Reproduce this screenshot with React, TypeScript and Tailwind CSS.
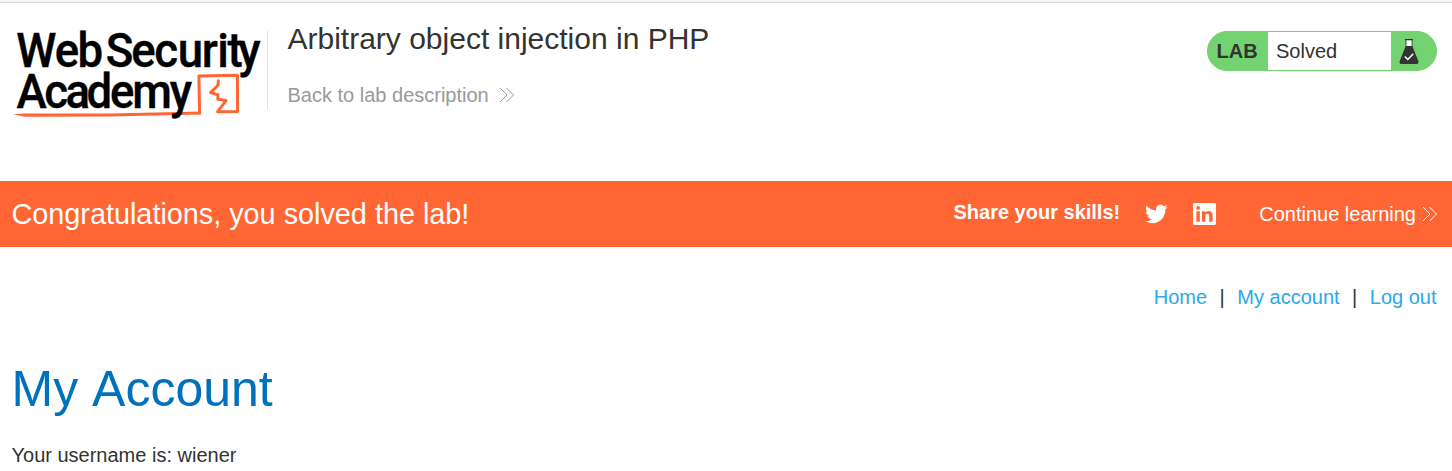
import React from 'react';

function Logo() {
  return (
    <svg width="268" height="126" viewBox="0 0 268 126" className="block shrink-0" aria-label="Web Security Academy">
      <path
        d="M199.6 113.2 L198.9 76 L237.4 75.3 L237.6 111.4 L217.6 111.7 L226 100.6 L217.8 99.2 L218 94.8 L210.6 92.6 L217.9 85.2 L218.4 80.8"
        fill="none"
        stroke="#ff6633"
        strokeWidth="3"
        strokeLinejoin="round"
        strokeLinecap="round"
      />
      <path d="M13 114.3 L25 113.5 L110 113.5 L201 111.5 L200.6 114.4 L110 116.5 L25 116.8 Z" fill="#ff6633" />
      <g transform="scale(0.95 1)" fill="#000" stroke="#000" strokeWidth="0.4" fontFamily="Roboto, sans-serif" fontWeight="500" fontSize="48">
        <text x="17.2 57.7 81.6" y="67">Web</text>
        <text x="111.3 138.2 162.5 187.2 212.5 228.7 239.6 250.8" y="67">Security</text>
        <text x="17.5 46.7 69 91.1 115.8 139.3 178.7" y="108">Academy</text>
      </g>
    </svg>
  );
}

function Chevrons({ className }: { className: string }) {
  return (
    <svg width="16" height="16" viewBox="0 0 16 16" className={className} fill="none" stroke="currentColor" strokeWidth="1">
      <path d="M1 1 L8 8 L1 15 M7.5 1 L14.5 8 L7.5 15" />
    </svg>
  );
}

function Flask() {
  return (
    <svg width="20" height="26" viewBox="0 0 20 26" className="mt-[2px] block">
      <path d="M7 1 V8 H13 V1 Z" fill="#fff" />
      <path d="M6 .7 H14" stroke="#333332" strokeWidth="1.2" fill="none" />
      <path d="M7 1 V8 M13 1 V8" stroke="#333332" strokeWidth=".8" fill="none" />
      <path d="M6.7 7 H13.3 L19.3 22 Q20 25 17.5 25 H2.5 Q0 25 .7 22 Z" fill="#333332" />
      <path d="M5.8 17.5 L8.8 20.5 L14.3 14.8" fill="none" stroke="#fff" strokeWidth="1.5" />
    </svg>
  );
}

function Twitter() {
  return (
    <svg width="24" height="24" viewBox="0 0 24 24" fill="#fff" className="block">
      <path d="M23.643 4.937c-.835.37-1.732.62-2.675.733.962-.576 1.7-1.49 2.048-2.578-.9.534-1.897.922-2.958 1.13-.85-.904-2.06-1.47-3.4-1.47-2.572 0-4.658 2.086-4.658 4.66 0 .364.042.718.12 1.06-3.873-.195-7.304-2.05-9.602-4.868-.4.69-.63 1.49-.63 2.342 0 1.616.823 3.043 2.072 3.878-.764-.025-1.482-.234-2.11-.583v.06c0 2.257 1.605 4.14 3.737 4.568-.392.106-.803.162-1.227.162-.3 0-.593-.028-.877-.082.593 1.85 2.313 3.198 4.352 3.234-1.595 1.25-3.604 1.995-5.786 1.995-.376 0-.747-.022-1.112-.065 2.062 1.323 4.51 2.093 7.14 2.093 8.57 0 13.255-7.098 13.255-13.254 0-.2-.005-.402-.014-.602.91-.658 1.7-1.477 2.323-2.41z" />
    </svg>
  );
}

function LinkedIn() {
  return (
    <svg width="23" height="22" viewBox="0 0 24 24" preserveAspectRatio="none" fill="#fff" className="block">
      <path d="M20.447 20.452h-3.554v-5.569c0-1.328-.027-3.037-1.852-3.037-1.853 0-2.136 1.445-2.136 2.939v5.667H9.351V9h3.414v1.561h.046c.477-.9 1.637-1.85 3.37-1.85 3.601 0 4.267 2.37 4.267 5.455v6.286zM5.337 7.433a2.062 2.062 0 1 1 0-4.125 2.062 2.062 0 0 1 0 4.125zm1.782 13.019H3.555V9h3.564v11.452zM22.225 0H1.771C.792 0 0 .774 0 1.729v20.542C0 23.227.792 24 1.771 24h20.451C23.2 24 24 23.227 24 22.271V1.729C24 .774 23.2 0 22.222 0h.003z" />
    </svg>
  );
}

export default function App() {
  return (
    <div className="h-[471px] w-full overflow-hidden bg-white font-['Liberation_Sans',Arial,sans-serif] text-[20px] leading-[24px] text-[#333332]">
      <div className="h-[3px] border-b border-[#dadce0] bg-[#f3f4f6]" />
      <header className="-mt-[3px] flex h-[181px] items-start">
        <div className="flex">
          <Logo />
        </div>
        <div className="-ml-px mt-[31px] h-[78px] w-px bg-[#e0e0e0]" />
        <div className="ml-[19.5px] flex flex-col whitespace-nowrap pt-[21px]">
          <h1 className="text-[30px] leading-[36px]">Arbitrary object injection in PHP</h1>
          <a className="mt-[26px] flex items-center text-[#999999]">
            Back to lab description
            <Chevrons className="ml-[10px]" />
          </a>
        </div>
        <div className="ml-auto mr-[15px] mt-[31px] flex h-10 w-[230px] items-stretch overflow-hidden rounded-[20px] border border-[#72d370] bg-[#72d370]">
          <div className="flex w-[60px] items-center pl-[8.5px] font-bold">LAB</div>
          <div className="flex w-[123px] items-center bg-white pl-[8px]">Solved</div>
          <div className="flex items-center pl-[8px]">
            <Flask />
          </div>
        </div>
      </header>
      <section className="flex h-[66px] items-center whitespace-nowrap bg-[#ff6633] pl-[11.5px] pr-[14px] text-white">
        <h4 className="text-[28.8px] leading-[36px]">Congratulations, you solved the lab!</h4>
        <span className="-mt-[4px] ml-auto font-bold">Share your skills!</span>
        <span className="ml-[24px]"><Twitter /></span>
        <span className="ml-[25px]"><LinkedIn /></span>
        <a className="ml-[43px] flex items-center">
          Continue learning
          <Chevrons className="ml-[6px]" />
        </a>
      </section>
      <nav className="mt-[38px] flex justify-end whitespace-nowrap pr-[15.5px]">
        <a className="text-[#29a9e6]">Home</a>
        <span className="mx-[12.5px]">|</span>
        <a className="text-[#29a9e6]">My account</a>
        <span className="mx-[12.5px]">|</span>
        <a className="text-[#29a9e6]">Log out</a>
      </nav>
      <main className="px-[11.5px]">
        <h1 className="mt-[50px] text-[50px] leading-[60px] text-[#0071bc] [font-kerning:none]">My Account</h1>
        <p className="mt-[24px]">Your username is: wiener</p>
      </main>
    </div>
  );
}
